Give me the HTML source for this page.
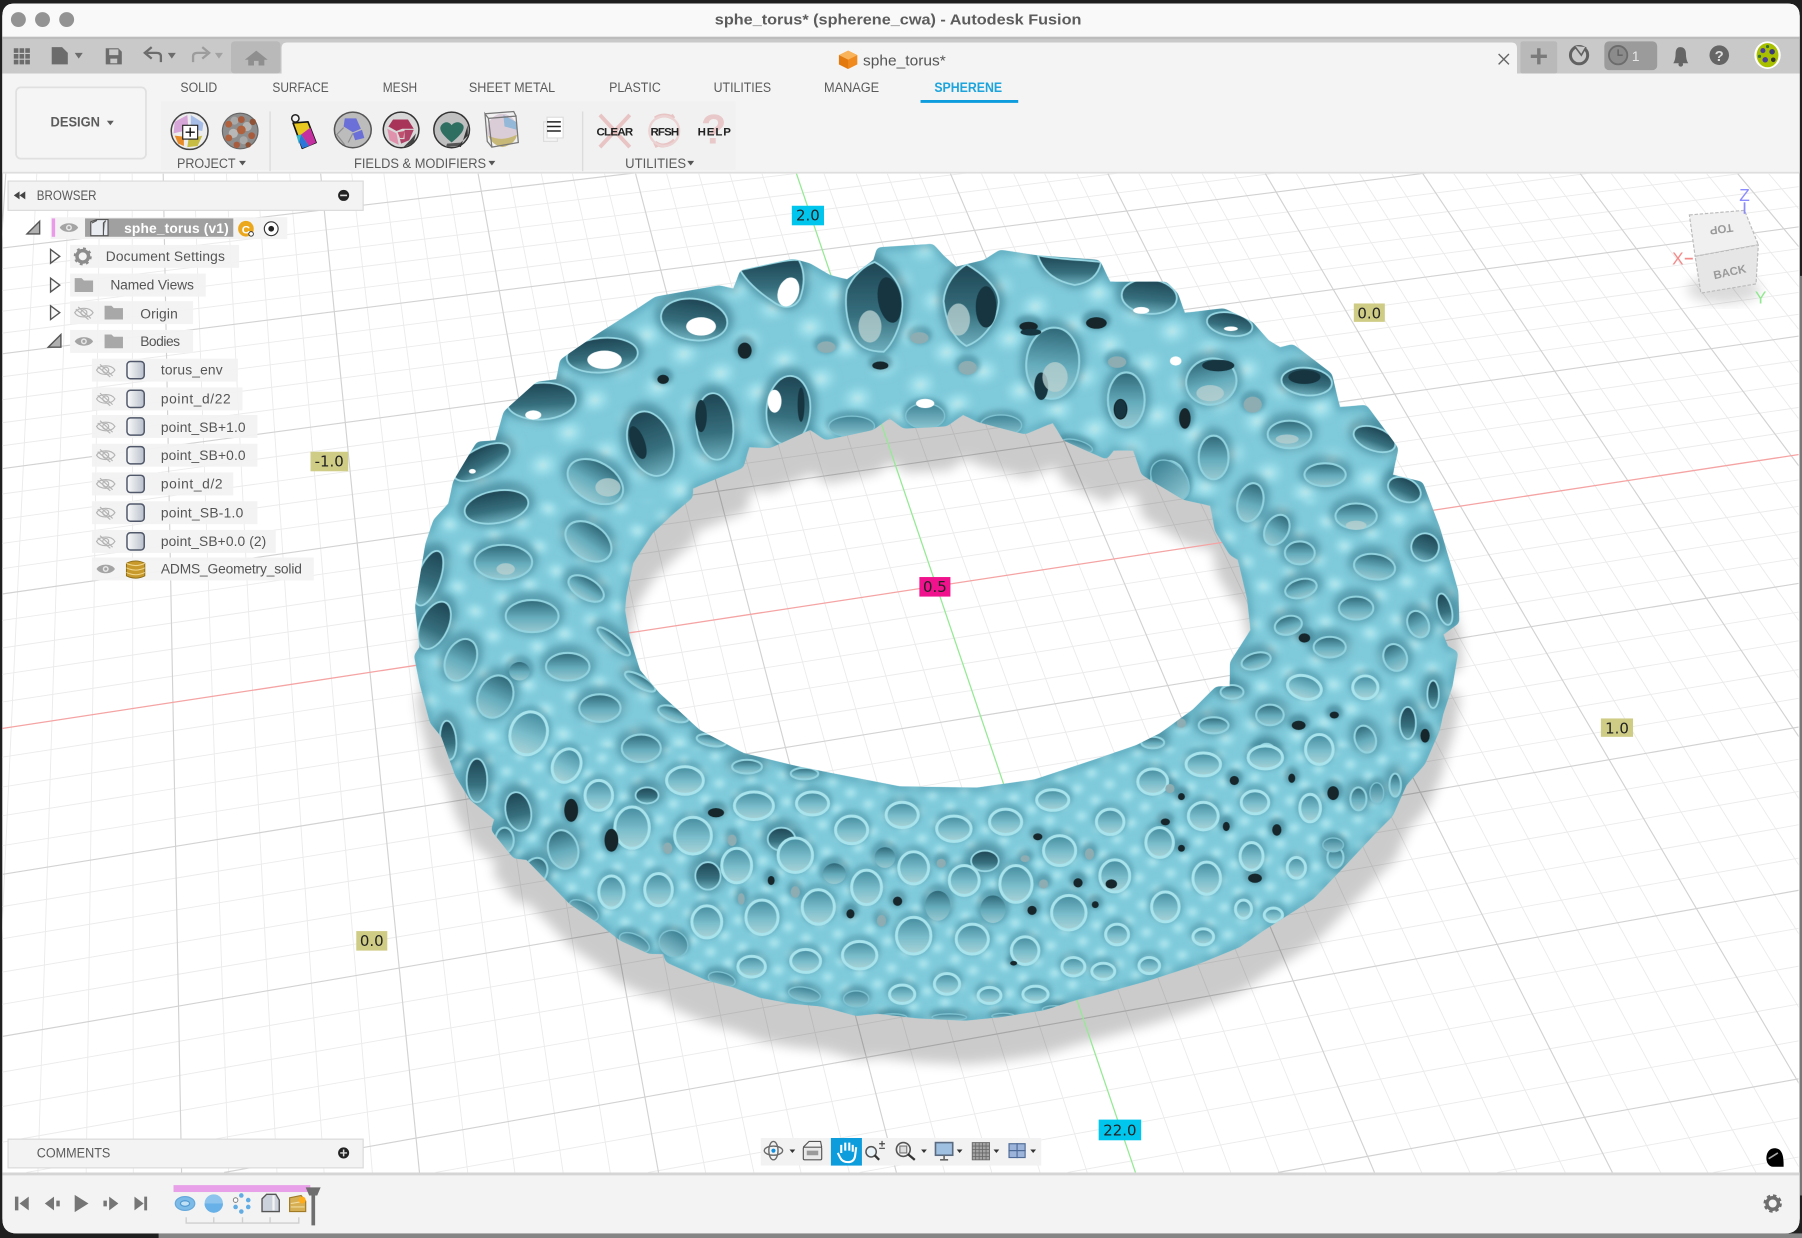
<!DOCTYPE html>
<html><head><meta charset="utf-8"><title>sphe_torus* (spherene_cwa) - Autodesk Fusion</title>
<style>html,body{margin:0;padding:0;background:#222;width:1802px;height:1238px;overflow:hidden}svg{display:block;overflow:hidden}
text{font-family:"Liberation Sans",sans-serif}
.t{fill:#5a5a5a;font-size:12px}.b{fill:#555;font-size:12px;letter-spacing:.3px}.l{fill:#222;font-family:"DejaVu Sans",sans-serif;font-size:13px;text-anchor:middle}
.mn{stroke:#ebebeb;stroke-width:.8;fill:none}.mj{stroke:#d2d2d2;stroke-width:1;fill:none}</style></head><body>
<svg width="1802" height="1238" viewBox="0 0 1568 1077" preserveAspectRatio="none" xmlns="http://www.w3.org/2000/svg">
<defs>
<filter id="b1" filterUnits="userSpaceOnUse" x="340" y="190" width="950" height="720"><feGaussianBlur stdDeviation="1.800"/></filter>
<filter id="b2" x="-20%" y="-20%" width="140%" height="140%"><feGaussianBlur stdDeviation="2"/></filter>
<filter id="b3" x="-20%" y="-20%" width="140%" height="140%"><feGaussianBlur stdDeviation="3.2"/></filter>
<filter id="b5" x="-20%" y="-20%" width="140%" height="140%"><feGaussianBlur stdDeviation="5"/></filter>
<filter id="goo" filterUnits="userSpaceOnUse" x="340" y="190" width="950" height="720"><feGaussianBlur in="SourceAlpha" stdDeviation="2.6" result="a"/><feComponentTransfer in="a" result="t"><feFuncA type="linear" slope="10" intercept="-4.5"/></feComponentTransfer><feComposite in="SourceGraphic" in2="t" operator="in"/></filter>
<radialGradient id="sp"><stop offset="0" stop-color="#c6e8e8"/><stop offset=".3" stop-color="#a8e6f0" stop-opacity=".85"/><stop offset="1" stop-color="#8fd8e6" stop-opacity="0"/></radialGradient>
<linearGradient id="gd" x1="0" y1="0" x2="0" y2="1"><stop offset="0" stop-color="#1f4654"/><stop offset=".6" stop-color="#37707f"/><stop offset="1" stop-color="#6fb0be"/></linearGradient>
<linearGradient id="gm" x1="0" y1="0" x2="0" y2="1"><stop offset="0" stop-color="#2f6878"/><stop offset=".55" stop-color="#66adbd"/><stop offset="1" stop-color="#98cad2"/></linearGradient>
<linearGradient id="gl" x1="0" y1="0" x2="0" y2="1"><stop offset="0" stop-color="#458da0"/><stop offset=".55" stop-color="#7bbecc"/><stop offset="1" stop-color="#aad4d8"/></linearGradient>
<linearGradient id="gc" x1="0" y1="0" x2="0" y2="1"><stop offset="0" stop-color="#3e8396"/><stop offset="1" stop-color="#8cc6d2"/></linearGradient>
<linearGradient id="cy" x1="0" y1="0" x2="1" y2="0"><stop offset="0" stop-color="#fafafa"/><stop offset="1" stop-color="#b9c0cc"/></linearGradient>
<pattern id="pa" width="56" height="46" patternUnits="userSpaceOnUse" patternTransform="rotate(-12)"><ellipse cx="14" cy="11" rx="17" ry="14" fill="url(#sp)"/><ellipse cx="42" cy="34" rx="17" ry="14" fill="url(#sp)"/></pattern>
<pattern id="pb" width="40" height="34" patternUnits="userSpaceOnUse" patternTransform="rotate(14)"><ellipse cx="10" cy="8" rx="12" ry="10" fill="url(#sp)"/><ellipse cx="30" cy="25" rx="12" ry="10" fill="url(#sp)"/></pattern>
<pattern id="pc" width="28" height="24" patternUnits="userSpaceOnUse" patternTransform="rotate(-8)"><ellipse cx="7" cy="6" rx="8.500" ry="7.500" fill="url(#sp)"/><ellipse cx="21" cy="18" rx="8.500" ry="7.500" fill="url(#sp)"/></pattern>
<clipPath id="vp"><rect x="2" y="151" width="1563" height="869"/></clipPath>
<clipPath id="tc"><path clip-rule="evenodd" d="M763 215L812 212 821 222 832 232 856 226 870 217 902 222 957 226 966 245 1015 245 1025 255 1031 272 1065 268 1090 280 1104 296 1114 302 1125 299 1159 325 1166 354 1189 352 1217 390 1212 413 1238 419 1253 459 1263 493 1269 514 1270 542 1256 552 1260 562 1269 567 1264 597 1256 621 1253 635 1240 665 1224 683 1212 710 1198 724 1166 758 1143 782 1099 810 1079 824 1040 840 1000 853 957 865 937 870 908 879 870 885 841 888 798 886 764 882 745 884 716 876 687 873 661 868 638 859 615 853 579 837 577 830 565 830 539 818 520 803 495 786 458 748 447 747 427 722 430 713 409 696 396 675 384 641 374 629 365 595 360 570 365 563 361 528 370 473 377 452 390 438 394 419 415 384 431 383 438 358 467 332 484 330 487 313 519 291 555 268 570 258 609 251 626 248 638 251 644 235 690 225 705 229 722 239 737 243 760 226ZM652 389L670 390 705 374 718 383 760 374 774 364 786 373 824 371 838 361 850 367 892 378 916 368 925 383 963 400 969 392 986 392 993 413 1030 435 1053 440 1057 462 1070 483 1077 487 1085 521 1088 548 1079 562 1070 576 1070 597 1058 597 1038 617 1009 638 989 648 957 659 900 678 850 685 783 684 696 667 647 655 609 635 574 603 557 583 548 554 544 531 545 519 551 490 568 464 586 447 603 433 603 425 647 407Z"/></clipPath>
<path id="tp" fill-rule="evenodd" d="M763 215L812 212 821 222 832 232 856 226 870 217 902 222 957 226 966 245 1015 245 1025 255 1031 272 1065 268 1090 280 1104 296 1114 302 1125 299 1159 325 1166 354 1189 352 1217 390 1212 413 1238 419 1253 459 1263 493 1269 514 1270 542 1256 552 1260 562 1269 567 1264 597 1256 621 1253 635 1240 665 1224 683 1212 710 1198 724 1166 758 1143 782 1099 810 1079 824 1040 840 1000 853 957 865 937 870 908 879 870 885 841 888 798 886 764 882 745 884 716 876 687 873 661 868 638 859 615 853 579 837 577 830 565 830 539 818 520 803 495 786 458 748 447 747 427 722 430 713 409 696 396 675 384 641 374 629 365 595 360 570 365 563 361 528 370 473 377 452 390 438 394 419 415 384 431 383 438 358 467 332 484 330 487 313 519 291 555 268 570 258 609 251 626 248 638 251 644 235 690 225 705 229 722 239 737 243 760 226ZM652 389L670 390 705 374 718 383 760 374 774 364 786 373 824 371 838 361 850 367 892 378 916 368 925 383 963 400 969 392 986 392 993 413 1030 435 1053 440 1057 462 1070 483 1077 487 1085 521 1088 548 1079 562 1070 576 1070 597 1058 597 1038 617 1009 638 989 648 957 659 900 678 850 685 783 684 696 667 647 655 609 635 574 603 557 583 548 554 544 531 545 519 551 490 568 464 586 447 603 433 603 425 647 407Z"/>
<g id="hd">
<path d="M644 235C660 232 680 226 695 226 700 235 701 246 696 260 690 270 680 268 672 262 660 254 650 245 644 235Z"/>
<path d="M903 222C920 226 945 226 958 228 956 238 950 246 935 248 920 245 908 238 903 222Z"/>
<path d="M761 228C776 236 787 250 785 268 784 285 776 300 769 306 757 306 747 303 742 291 736 278 735 262 737 252 742 240 752 231 761 228Z"/>
<path d="M841 230C855 238 869 250 869 263 868 280 855 296 841 301 830 295 823 280 821 262 822 248 831 236 841 230Z"/>
<ellipse cx="604" cy="278" rx="29" ry="18" transform="rotate(8 604 278)"/>
<ellipse cx="524" cy="309" rx="31" ry="15" transform="rotate(-5 524 309)"/>
<ellipse cx="471" cy="349" rx="30" ry="16" transform="rotate(-3 471 349)"/>
<ellipse cx="419" cy="402" rx="27" ry="12" transform="rotate(-28 419 402)"/>
<ellipse cx="622" cy="371" rx="16" ry="29" transform="rotate(-5 622 371)"/>
<ellipse cx="566" cy="386" rx="19" ry="29" transform="rotate(-20 566 386)"/>
<ellipse cx="686" cy="357" rx="19" ry="30" transform="rotate(5 686 357)"/>
<ellipse cx="373" cy="503" rx="10" ry="25" transform="rotate(20 373 503)"/>
<ellipse cx="378" cy="544" rx="12" ry="22" transform="rotate(25 378 544)"/>
<ellipse cx="432" cy="441" rx="28" ry="14" transform="rotate(-10 432 441)"/>
<ellipse cx="1000" cy="258" rx="24" ry="15" transform="rotate(5 1000 258)"/>
<ellipse cx="1070" cy="282" rx="20" ry="10" transform="rotate(10 1070 282)"/>
<ellipse cx="1137" cy="332" rx="22" ry="12" transform="rotate(5 1137 332)"/>
<ellipse cx="1196" cy="382" rx="19" ry="10" transform="rotate(20 1196 382)"/>
<ellipse cx="1222" cy="426" rx="15" ry="10" transform="rotate(25 1222 426)"/>
<ellipse cx="1240" cy="476" rx="12" ry="12" transform="rotate(20 1240 476)"/>
<ellipse cx="1257" cy="530" rx="6" ry="14" transform="rotate(-15 1257 530)"/>
<ellipse cx="1247" cy="604" rx="5" ry="12"/><ellipse cx="1225" cy="629" rx="7" ry="14"/>
<ellipse cx="415" cy="679" rx="9" ry="19"/><ellipse cx="390" cy="644" rx="7" ry="17" transform="rotate(-5 390 644)"/>
<ellipse cx="451" cy="706" rx="11" ry="17" transform="rotate(-12 451 706)"/>
<ellipse cx="563" cy="692" rx="10" ry="7"/><ellipse cx="680" cy="730" rx="12" ry="10"/><ellipse cx="616" cy="762" rx="11" ry="12"/><ellipse cx="857" cy="749" rx="12" ry="9"/><ellipse cx="1102" cy="655" rx="8" ry="8"/>
</g>
<g id="hm">
<ellipse cx="518" cy="419" rx="26" ry="17" transform="rotate(30 518 419)"/>
<ellipse cx="512" cy="471" rx="22" ry="15" transform="rotate(35 512 471)"/>
<ellipse cx="438" cy="489" rx="25" ry="15"/><ellipse cx="463" cy="536" rx="23" ry="14"/>
<ellipse cx="401" cy="574" rx="13" ry="19" transform="rotate(25 401 574)"/>
<ellipse cx="494" cy="580" rx="19" ry="12"/><ellipse cx="431" cy="606" rx="15" ry="19" transform="rotate(25 431 606)"/>
<ellipse cx="522" cy="616" rx="18" ry="12"/><ellipse cx="558" cy="651" rx="17" ry="12"/>
<ellipse cx="510" cy="512" rx="17" ry="9" transform="rotate(30 510 512)"/>
<ellipse cx="534" cy="558" rx="18" ry="5" transform="rotate(40 534 558)"/>
<ellipse cx="557" cy="593" rx="15" ry="5" transform="rotate(30 557 593)"/>
<ellipse cx="586" cy="621" rx="14" ry="6" transform="rotate(20 586 621)"/>
<ellipse cx="619" cy="644" rx="13" ry="5" transform="rotate(10 619 644)"/>
<ellipse cx="650" cy="667" rx="13" ry="6"/><ellipse cx="700" cy="673" rx="12" ry="5"/>
<ellipse cx="916" cy="316" rx="23" ry="31" transform="rotate(5 916 316)"/>
<ellipse cx="980" cy="348" rx="16" ry="24"/>
<ellipse cx="1054" cy="332" rx="22" ry="20" transform="rotate(-15 1054 332)"/>
<ellipse cx="1056" cy="398" rx="13" ry="19"/><ellipse cx="1122" cy="378" rx="19" ry="12"/>
<ellipse cx="1016" cy="416" rx="14" ry="15" transform="rotate(30 1016 416)"/>
<ellipse cx="1088" cy="437" rx="11" ry="17" transform="rotate(15 1088 437)"/>
<ellipse cx="1153" cy="413" rx="18" ry="10"/><ellipse cx="1111" cy="461" rx="10" ry="14" transform="rotate(30 1111 461)"/>
<ellipse cx="1180" cy="449" rx="18" ry="11"/><ellipse cx="1131" cy="481" rx="13" ry="10"/>
<ellipse cx="1196" cy="493" rx="18" ry="11" transform="rotate(8 1196 493)"/>
<ellipse cx="1132" cy="512" rx="14" ry="8" transform="rotate(-15 1132 512)"/>
<ellipse cx="1180" cy="529" rx="15" ry="10"/><ellipse cx="1121" cy="544" rx="12" ry="8" transform="rotate(-15 1121 544)"/>
<ellipse cx="1157" cy="563" rx="14" ry="9"/><ellipse cx="1234" cy="543" rx="9" ry="12" transform="rotate(-25 1234 543)"/>
<ellipse cx="1093" cy="575" rx="13" ry="7" transform="rotate(-15 1093 575)"/>
<ellipse cx="1072" cy="602" rx="10" ry="6"/><ellipse cx="1105" cy="622" rx="12" ry="9"/>
<ellipse cx="1056" cy="631" rx="13" ry="7"/><ellipse cx="1003" cy="646" rx="10" ry="5"/>
<ellipse cx="1214" cy="572" rx="10" ry="12" transform="rotate(-25 1214 572)"/>
<ellipse cx="1188" cy="643" rx="9" ry="12" transform="rotate(-20 1188 643)"/>
<ellipse cx="1214" cy="683" rx="5" ry="10"/><ellipse cx="1182" cy="695" rx="7" ry="10"/>
<ellipse cx="1162" cy="746" rx="7" ry="9"/><ellipse cx="490" cy="739" rx="13" ry="17" transform="rotate(-15 490 739)"/>
<ellipse cx="466" cy="758" rx="10" ry="12" transform="rotate(25 466 758)"/><ellipse cx="439" cy="731" rx="8" ry="11"/>
</g>
<g id="hl">
<ellipse cx="460" cy="638" rx="16" ry="19" transform="rotate(20 460 638)"/><ellipse cx="493" cy="666" rx="12" ry="15" transform="rotate(25 493 666)"/>
<ellipse cx="596" cy="679" rx="16" ry="12"/><ellipse cx="521" cy="692" rx="12" ry="13"/>
<ellipse cx="656" cy="701" rx="17" ry="12"/><ellipse cx="707" cy="699" rx="14" ry="10"/>
<ellipse cx="550" cy="720" rx="15" ry="18"/><ellipse cx="603" cy="727" rx="16" ry="16"/>
<ellipse cx="785" cy="709" rx="14" ry="11"/><ellipse cx="741" cy="722" rx="14" ry="12"/>
<ellipse cx="830" cy="721" rx="15" ry="11"/><ellipse cx="875" cy="715" rx="14" ry="11"/>
<ellipse cx="916" cy="696" rx="14" ry="9"/><ellipse cx="922" cy="740" rx="14" ry="13"/>
<ellipse cx="641" cy="753" rx="13" ry="15"/><ellipse cx="692" cy="744" rx="15" ry="15"/>
<ellipse cx="795" cy="755" rx="13" ry="14"/><ellipse cx="839" cy="766" rx="13" ry="13"/>
<ellipse cx="884" cy="769" rx="14" ry="16"/><ellipse cx="754" cy="772" rx="13" ry="15"/>
<ellipse cx="573" cy="774" rx="12" ry="14"/><ellipse cx="532" cy="776" rx="11" ry="14"/>
<ellipse cx="712" cy="789" rx="14" ry="15"/><ellipse cx="663" cy="798" rx="14" ry="15"/>
<ellipse cx="615" cy="802" rx="13" ry="14"/><ellipse cx="795" cy="814" rx="15" ry="16"/>
<ellipse cx="846" cy="817" rx="14" ry="13"/><ellipse cx="892" cy="827" rx="12" ry="12"/>
<ellipse cx="930" cy="794" rx="15" ry="15"/><ellipse cx="748" cy="831" rx="15" ry="12"/>
<ellipse cx="701" cy="836" rx="13" ry="10"/><ellipse cx="654" cy="841" rx="12" ry="9"/>
<ellipse cx="824" cy="856" rx="11" ry="9"/><ellipse cx="785" cy="865" rx="11" ry="8"/>
<ellipse cx="861" cy="866" rx="10" ry="7"/><ellipse cx="901" cy="865" rx="11" ry="7"/>
<ellipse cx="934" cy="841" rx="10" ry="8"/>
<ellipse cx="1135" cy="598" rx="15" ry="10" transform="rotate(15 1135 598)"/><ellipse cx="1188" cy="598" rx="11" ry="10"/>
<ellipse cx="1148" cy="652" rx="12" ry="13"/><ellipse cx="1101" cy="659" rx="15" ry="10"/>
<ellipse cx="1047" cy="665" rx="15" ry="10"/><ellipse cx="1092" cy="698" rx="12" ry="10"/>
<ellipse cx="1140" cy="703" rx="9" ry="12"/><ellipse cx="1003" cy="680" rx="13" ry="11"/>
<ellipse cx="1047" cy="710" rx="13" ry="12"/><ellipse cx="966" cy="715" rx="12" ry="11"/>
<ellipse cx="1009" cy="733" rx="12" ry="13"/><ellipse cx="1089" cy="745" rx="10" ry="12"/>
<ellipse cx="1050" cy="764" rx="12" ry="14"/><ellipse cx="970" cy="762" rx="13" ry="14"/>
<ellipse cx="1014" cy="789" rx="12" ry="13"/><ellipse cx="1128" cy="755" rx="8" ry="9"/>
<ellipse cx="1082" cy="791" rx="7" ry="8"/><ellipse cx="1047" cy="815" rx="9" ry="7"/>
<ellipse cx="1108" cy="796" rx="8" ry="6"/><ellipse cx="972" cy="813" rx="10" ry="9"/>
<ellipse cx="1000" cy="840" rx="9" ry="7"/><ellipse cx="960" cy="845" rx="10" ry="7"/>
</g>
<g id="pl"><ellipse cx="726" cy="760" rx="10" ry="9"/><ellipse cx="770" cy="746" rx="9" ry="9"/><ellipse cx="816" cy="788" rx="11" ry="13"/><ellipse cx="864" cy="791" rx="11" ry="12"/><ellipse cx="452" cy="584" rx="9" ry="8"/></g>
<g id="hc">
<ellipse cx="741" cy="371" rx="20" ry="9"/><ellipse cx="805" cy="362" rx="17" ry="11"/><ellipse cx="871" cy="370" rx="18" ry="9"/>
<ellipse cx="937" cy="388" rx="14" ry="5" transform="rotate(15 937 388)"/><ellipse cx="1018" cy="418" rx="14" ry="20" transform="rotate(-40 1018 418)"/>
<ellipse cx="552" cy="820" rx="14" ry="7" transform="rotate(25 552 820)"/><ellipse cx="586" cy="821" rx="13" ry="11" transform="rotate(30 586 821)"/>
<ellipse cx="628" cy="852" rx="12" ry="6" transform="rotate(15 628 852)"/><ellipse cx="700" cy="865" rx="14" ry="6" transform="rotate(10 700 865)"/>
<ellipse cx="745" cy="869" rx="11" ry="7"/><ellipse cx="777" cy="885" rx="12" ry="3"/><ellipse cx="826" cy="885" rx="15" ry="3"/>
<ellipse cx="873" cy="884" rx="10" ry="2.5"/><ellipse cx="917" cy="878" rx="10" ry="3"/><ellipse cx="508" cy="792" rx="14" ry="7" transform="rotate(30 508 792)"/>
<ellipse cx="1160" cy="735" rx="9" ry="6"/><ellipse cx="1198" cy="690" rx="6" ry="9"/>
</g>
<g id="pg">
<ellipse cx="719" cy="302" rx="8" ry="5"/><ellipse cx="800" cy="294" rx="8" ry="5"/><ellipse cx="842" cy="320" rx="8" ry="6"/>
<ellipse cx="972" cy="315" rx="8" ry="5"/><ellipse cx="1090" cy="352" rx="8" ry="7"/>
<ellipse cx="637" cy="731" rx="4" ry="5"/><ellipse cx="581" cy="738" rx="4" ry="5"/><ellipse cx="692" cy="776" rx="4" ry="5"/><ellipse cx="645" cy="782" rx="3" ry="5"/><ellipse cx="767" cy="801" rx="4" ry="5"/><ellipse cx="819" cy="751" rx="4" ry="4"/><ellipse cx="892" cy="747" rx="4" ry="3"/><ellipse cx="908" cy="769" rx="4" ry="4"/><ellipse cx="948" cy="743" rx="4" ry="5"/><ellipse cx="1018" cy="686" rx="4" ry="4"/><ellipse cx="1028" cy="629" rx="4" ry="4"/>
</g>
<g id="pk">
<ellipse cx="648" cy="305" rx="6" ry="7"/><ellipse cx="577" cy="330" rx="5" ry="4"/><ellipse cx="766" cy="318" rx="7" ry="3.5"/><ellipse cx="895" cy="284" rx="8" ry="4"/><ellipse cx="954" cy="281" rx="9" ry="5"/>
<ellipse cx="975" cy="356" rx="6" ry="9"/><ellipse cx="1031" cy="364" rx="5" ry="9"/><ellipse cx="671" cy="766" rx="3" ry="4"/><ellipse cx="740" cy="795" rx="3.5" ry="4"/><ellipse cx="781" cy="784" rx="4" ry="4"/><ellipse cx="898" cy="792" rx="4" ry="4"/><ellipse cx="938" cy="768" rx="4" ry="4"/><ellipse cx="882" cy="838" rx="3" ry="2"/><ellipse cx="953" cy="787" rx="3" ry="3"/>
<ellipse cx="623" cy="707" rx="7" ry="4"/><ellipse cx="903" cy="728" rx="4" ry="3"/><ellipse cx="1161" cy="622" rx="4" ry="3"/><ellipse cx="1124" cy="677" rx="3" ry="4"/><ellipse cx="1111" cy="722" rx="4" ry="5"/><ellipse cx="967" cy="769" rx="5" ry="4"/><ellipse cx="1092" cy="764" rx="6" ry="4"/><ellipse cx="1067" cy="719" rx="3" ry="4"/><ellipse cx="1028" cy="738" rx="3" ry="3"/><ellipse cx="1014" cy="715" rx="4" ry="3"/><ellipse cx="1028" cy="693" rx="3" ry="3"/><ellipse cx="1074" cy="679" rx="4" ry="4"/><ellipse cx="1130" cy="631" rx="6" ry="4"/>
<ellipse cx="497" cy="705" rx="6" ry="10"/><ellipse cx="532" cy="731" rx="6" ry="10"/><ellipse cx="1240" cy="640" rx="4" ry="6"/><ellipse cx="1160" cy="690" rx="5" ry="6"/><ellipse cx="1135" cy="555" rx="5" ry="4"/>
</g>
<g id="eye"><path d="M-8 0C-5 -5 5 -5 8 0 5 5 -5 5 -8 0Z" fill="#a4a4a4"/><circle r="2.6" fill="#e6e6e6"/><circle r="1.3" fill="#a4a4a4"/></g>
<g id="eo" fill="none" stroke="#b4b4b4" stroke-width="1"><path d="M-8 0C-5 -5 5 -5 8 0 5 5 -5 5 -8 0Z"/><circle r="2.6"/><path d="M-5 -5L6 5M-7 -3L4 6"/></g>
<g id="bd"><rect x="-7.5" y="-7.5" width="15" height="15" rx="3" fill="url(#cy)" stroke="#50586a" stroke-width="1.3"/></g>
<path id="fd" d="M-8 -6H-2L0 -4H8V6H-8Z" fill="#a8a8a8"/>
<path id="ti" d="M0 -6L8 0 0 6Z" fill="#fafafa" stroke="#555" stroke-width="1.2"/>
<path id="tx" d="M-6 5L5 -6V5Z" fill="#b0b0b0" stroke="#555" stroke-width="1.2"/>
</defs>

<rect width="1568" height="1077" fill="#1f1f1f"/>
<path d="M2 14Q2 3 13 3H1555Q1566 3 1566 14V1060Q1566 1073 1553 1073H15Q2 1073 2 1060Z" fill="#fff"/>
<rect x="138" y="1073" width="1430" height="4" fill="#858585"/>
<rect x="1566" y="240" width="2" height="800" fill="#777"/>
<path d="M2 14Q2 3 13 3H1555Q1566 3 1566 14V32H2Z" fill="#f9f9f9"/>
<circle cx="16" cy="17" r="6.5" fill="#939393"/><circle cx="37" cy="17" r="6.5" fill="#939393"/><circle cx="58" cy="17" r="6.5" fill="#939393"/>
<text x="622" y="21.5" font-size="13" font-weight="bold" fill="#5c5c5c" textLength="319" lengthAdjust="spacingAndGlyphs">sphe_torus* (spherene_cwa) - Autodesk Fusion</text>
<rect x="2" y="32" width="1564" height="32" fill="#c9c9c9"/>
<rect x="2" y="32" width="1564" height="2" fill="#bcbcbc"/>
<rect x="201" y="36" width="43" height="28" rx="3" fill="#b9b9b9"/>
<path d="M245 64V42Q245 37 250 37H1315Q1320 37 1320 42V64Z" fill="#f4f4f4"/>
<rect x="1323" y="36" width="32" height="28" rx="2" fill="#b9b9b9"/>
<rect x="2" y="64" width="1564" height="86" fill="#f4f4f4"/>
<rect x="2" y="149.500" width="1564" height="1.5" fill="#dedede"/>

<g fill="#6c6c6c">
<path d="M12 42h4v4h-4zM17 42h4v4h-4zM22 42h4v4h-4zM12 47h4v4h-4zM17 47h4v4h-4zM22 47h4v4h-4zM12 52h4v4h-4zM17 52h4v4h-4zM22 52h4v4h-4z"/>
<path d="M45 41H54L59 46V56H45Z"/><path d="M65 46H72L68.500 51Z"/>
<path d="M92 42H103L106 45V56H92ZM95 43V48H103V43ZM96 51V55H102V51Z" fill-rule="evenodd"/>
<path d="M146 46H153L149.500 51Z"/><path d="M187 46H194L190.500 51Z" fill="#a2a2a2"/>
<path d="M216 57V52H213L223 44 233 52H230V57H225V53H221V57Z" fill="#8f8f8f"/>
</g>
<path d="M140 54V49Q140 46 136 46H128M132 41L126 46 132 51" fill="none" stroke="#6c6c6c" stroke-width="2"/>
<path d="M168 54V49Q168 46 172 46H180M176 41L182 46 176 51" fill="none" stroke="#9c9c9c" stroke-width="2"/>
<path d="M738 44L746 48V56L738 60 730 56V48Z" fill="#f08a1e"/><path d="M738 44L746 48 738 52 730 48Z" fill="#f9b35a"/><path d="M738 52V60L730 56V48Z" fill="#e27a10"/>
<text x="751" y="57" font-size="13" fill="#555" textLength="72" lengthAdjust="spacingAndGlyphs">sphe_torus*</text>
<path d="M1304 47L1313 56M1313 47L1304 56" stroke="#666" stroke-width="1.2"/>
<path d="M1339 42V56M1332 49H1346" stroke="#7a7a7a" stroke-width="3"/>
<circle cx="1374" cy="48" r="7.5" fill="none" stroke="#616161" stroke-width="2.6"/><path d="M1370 40L1376 48 1380 41" fill="#c9c9c9" stroke="#616161" stroke-width="1.4"/>
<rect x="1396" y="36" width="46" height="25" rx="4" fill="#9b9b9b"/>
<circle cx="1408" cy="48" r="8" fill="#8b8b8b" stroke="#6c6c6c" stroke-width="1.6"/><path d="M1408 43V48H1412" fill="none" stroke="#616161" stroke-width="1.2"/>
<text x="1420" y="53" font-size="12" fill="#e8e8e8">1</text>
<path d="M1456 55Q1458 52 1458 47 1458 41 1462 41 1467 41 1467 47 1467 52 1469 55Z" fill="#656565"/><circle cx="1462.500" cy="56" r="2" fill="#656565"/>
<circle cx="1496" cy="48" r="8.5" fill="#656565"/><text x="1496" y="53" font-size="13" font-weight="bold" fill="#ddd" text-anchor="middle">?</text>
<ellipse cx="1538" cy="48" rx="11.500" ry="12" fill="#fff"/><ellipse cx="1538" cy="48" rx="9.500" ry="10.500" fill="#a8c000"/><circle cx="1534" cy="44" r="2.200" fill="#4a3f9c"/><circle cx="1542" cy="45" r="2.400" fill="#3a3a7c"/><circle cx="1536" cy="52" r="2.400" fill="#4a3f9c"/><circle cx="1543" cy="52" r="2" fill="#333"/><circle cx="1538" cy="40.500" r="1.400" fill="#2f6d3a"/><circle cx="1531" cy="49" r="1.400" fill="#2f6d3a"/>

<rect x="14" y="76" width="113" height="62" rx="4" fill="#f5f5f5" stroke="#e0e0e0" stroke-width="1.5"/>
<text x="44" y="110" font-size="12" font-weight="bold" fill="#5c5c5c" textLength="43" lengthAdjust="spacingAndGlyphs">DESIGN</text><path d="M93 105H99L96 109Z" fill="#5c5c5c"/>
<rect x="140" y="88" width="500" height="60" fill="#f1f1f1"/>
<g class="t">
<text x="157" y="80" class="t" textLength="32" lengthAdjust="spacingAndGlyphs">SOLID</text>
<text x="237" y="80" class="t" textLength="49" lengthAdjust="spacingAndGlyphs">SURFACE</text>
<text x="333" y="80" class="t" textLength="30" lengthAdjust="spacingAndGlyphs">MESH</text>
<text x="408" y="80" class="t" textLength="75" lengthAdjust="spacingAndGlyphs">SHEET METAL</text>
<text x="530" y="80" class="t" textLength="45" lengthAdjust="spacingAndGlyphs">PLASTIC</text>
<text x="621" y="80" class="t" textLength="50" lengthAdjust="spacingAndGlyphs">UTILITIES</text>
<text x="717" y="80" class="t" textLength="48" lengthAdjust="spacingAndGlyphs">MANAGE</text></g>
<text x="813" y="80" font-size="12" font-weight="bold" fill="#1ea4dc" textLength="59" lengthAdjust="spacingAndGlyphs">SPHERENE</text>
<rect x="801" y="87" width="85" height="2.500" fill="#0d9cdd"/>
<text x="154" y="146" class="t" textLength="51" lengthAdjust="spacingAndGlyphs">PROJECT</text><path d="M208 140H214L211 144Z" fill="#555"/>
<text x="308" y="146" class="t" textLength="115" lengthAdjust="spacingAndGlyphs">FIELDS &amp; MODIFIERS</text><path d="M425 140H431L428 144Z" fill="#555"/>
<text x="544" y="146" class="t" textLength="53" lengthAdjust="spacingAndGlyphs">UTILITIES</text><path d="M598 140H604L601 144Z" fill="#555"/>
<path d="M235 97V149M507 97V149" stroke="#dcdcdc" stroke-width="1.2"/>

<!-- ribbon icons -->
<g><ellipse cx="165" cy="114" rx="16" ry="16" fill="#ededed" stroke="#444" stroke-width="1.300"/><path d="M152 106L163 100 164 113 151 116Z" fill="#d7a6d8"/><path d="M166 100L177 107 176 114 166 112Z" fill="#a6bee8"/><path d="M152 118L160 119 160 127 155 125Z" fill="#e88c2a"/><path d="M164 121L176 118 172 127 163 128Z" fill="#c8bd44"/><rect x="159" y="109" width="13" height="12" fill="#fff" stroke="#222"/><path d="M165.500 111V119M161.500 115H169.500" stroke="#111" stroke-width="1.200"/></g>
<g><circle cx="209" cy="114" r="15.500" fill="#8d8d8d" stroke="#666"/><circle cx="204" cy="105" r="3.500" fill="#a9a9a9"/><circle cx="215" cy="110" r="4" fill="#b4b4b4"/><circle cx="203" cy="116" r="4" fill="#b8b8b8"/><circle cx="212" cy="122" r="3.500" fill="#a9a9a9"/><circle cx="199" cy="108" r="3" fill="#b0623e"/><circle cx="210" cy="104" r="3" fill="#a85c3e"/><circle cx="220" cy="106" r="2.800" fill="#8e5236"/><circle cx="210" cy="113" r="3.800" fill="#b0623e"/><circle cx="219" cy="118" r="3" fill="#a85c3e"/><circle cx="199" cy="120" r="3" fill="#b0623e"/><circle cx="206" cy="126" r="2.800" fill="#a85c3e"/><circle cx="216" cy="126" r="2.400" fill="#8e5236"/></g>
<g><path d="M255 107L268 106 275 124 263 129Z" fill="#e8c81e" stroke="#111" stroke-width="1.400" stroke-linejoin="round"/><path d="M262 117L270 111 275 124 269 127Z" fill="#c430a0"/><path d="M262 117L269 127 263 129 258 118Z" fill="#2b76d8"/><path d="M262 117L258 118 260 125Z" fill="#30b8c8"/><circle cx="257" cy="103" r="3.200" fill="#f4f4f4" stroke="#222" stroke-width="1.300"/></g>
<g><ellipse cx="307" cy="113" rx="16" ry="15.500" fill="#bcbcbc" stroke="#555" stroke-width="1.300"/><path d="M300 103L310 103 314 112 307 115 299 110Z" fill="#6a70d8"/><path d="M307 116L315 113 317 120 309 122Z" fill="#6a70d8"/><path d="M299 111L293 117 300 126M307 116L303 124" fill="none" stroke="#8e8e8e"/></g>
<g><ellipse cx="349" cy="113" rx="15.500" ry="15.500" fill="#d8d8d8" stroke="#333" stroke-width="1.300"/><path d="M342 104H355L360 112 350 112 345 114 338 110Z" fill="#a9345a"/><path d="M337 112L345 116 347 126 339 122Z" fill="#e092ac"/><path d="M346 115L352 114 351 120 348 120Z" fill="#c0506e"/><path d="M352 113L360 113 356 122 349 125 348 121 352 121Z" fill="#b04468"/><path d="M357 122L362 116 360 124 350 129Z" fill="#444"/></g>
<g><ellipse cx="393" cy="113" rx="15.500" ry="15.500" fill="#c0c0c0" stroke="#333" stroke-width="1.300"/><path d="M398 127L407 118 407 109 401 128Z" fill="#333"/><path d="M388 128L398 127 402 124 389 125Z" fill="#555"/><path d="M393 124C386 118 381 113 384 109 387 105 391 106 393 109 395 106 400 105 403 109 405 113 400 118 393 124Z" fill="#2f6f62"/></g>
<g fill="none"><ellipse cx="437" cy="113" rx="13" ry="14" fill="#dacdd8"/><path d="M425 118Q437 124 450 117 448 126 437 128 428 126 425 118Z" fill="#c8b878"/><path d="M438 100L449 106 450 113 439 110Z" fill="#94b8d8"/><path d="M425 103L449 101 451 124 428 128ZM422 99L447 97 449 101M425 103L422 99 424 123 428 128" stroke="#777" stroke-width="1.100"/></g>
<g><rect x="473" y="106" width="12" height="17" fill="#f4f4f4" stroke="#ddd"/><rect x="476" y="102" width="14" height="18" fill="#fff" stroke="#ddd"/><path d="M476 106H488M476 110H488M476 114H488" stroke="#222" stroke-width="1.300"/></g>
<path d="M522 100L548 128M548 100L522 128" stroke="#e8c4c4" stroke-width="3.400"/>
<path d="M570 103Q578 98 586 103L584 100M587 122Q578 130 570 124L572 128" fill="none" stroke="#e8c4c4" stroke-width="3.400"/><circle cx="578" cy="114" r="13" fill="none" stroke="#ecd2d2" stroke-width="2"/>
<text x="621" y="125" font-size="36" font-weight="bold" fill="#e8c8c8" text-anchor="middle">?</text>
<g font-size="10" font-weight="bold" fill="#222"><text x="519" y="118" textLength="32" lengthAdjust="spacing">CLEAR</text><text x="566" y="118" textLength="25" lengthAdjust="spacing">RFSH</text><text x="607" y="118" textLength="29" lengthAdjust="spacing">HELP</text></g>

<!-- viewport -->
<g clip-path="url(#vp)">
<path class="mn" d="M32 151L0 846M60 151L33 1020M87 151L75 1020M115 151L116 1020M169 151L199 1020M197 151L241 1020M224 151L282 1020M252 151L324 1020M306 151L407 1020M334 151L448 1020M361 151L490 1020M389 151L531 1020M443 151L614 1020M471 151L656 1020M498 151L697 1020M526 151L739 1020M580 151L822 1020M608 151L863 1020M635 151L905 1020M663 151L946 1020M717 151L1030 1020M745 151L1071 1020M772 151L1113 1020M800 151L1154 1020M854 151L1237 1020M882 151L1279 1020M909 151L1320 1020M937 151L1362 1020M991 151L1445 1020M1019 151L1486 1020M1046 151L1528 1020M1074 151L1568 1020M1128 151L1568 881M1156 151L1568 817M1183 151L1568 757M1211 151L1568 699M1265 151L1568 594M1293 151L1568 544M1320 151L1568 497M1348 151L1568 452M1402 151L1568 368M1430 151L1568 328M1457 151L1568 290M1485 151L1568 253M1539 151L1568 185"/>
<path class="mn" d="M0 234L1568 46M0 253L1568 62M0 271L1568 77M0 290L1568 93M0 328L1568 127M0 348L1568 144M0 368L1568 162M0 388L1568 179M0 430L1568 216M0 452L1568 235M0 473L1568 254M0 495L1568 273M0 540L1568 313M0 564L1568 333M0 587L1568 354M0 611L1568 374M0 659L1568 417M0 685L1568 440M0 710L1568 462M0 736L1568 485M0 789L1568 532M0 817L1568 557M0 846L1568 582M0 874L1568 607M0 933L1568 660M0 963L1568 688M0 994L1568 717M23 1020L1568 746M379 1020L1568 807M564 1020L1568 840M748 1020L1568 873M929 1020L1568 905M1303 1020L1568 972M1491 1020L1568 1006"/>
<path class="mj" d="M5 151L0 230M142 151L158 1020M279 151L365 1020M416 151L573 1020M553 151L780 1020M827 151L1196 1020M964 151L1403 1020M1101 151L1568 947M1238 151L1568 645M1375 151L1568 409M1512 151L1568 218"/>
<path class="mj" d="M0 216L1568 30M0 308L1568 109M0 408L1568 197M0 517L1568 292M0 761L1568 507M0 902L1568 632M195 1020L1568 774M1112 1020L1568 938"/>
<use href="#tp" transform="translate(2 38)" fill="#000" opacity=".2" filter="url(#b5)"/>
<path d="M0 634L1568 395" stroke="#f5a3a3" stroke-width="1.100"/>
<path d="M693 151L988 1020" stroke="#94ea94" stroke-width="1.100"/>

<g filter="url(#goo)">
<use href="#tp" fill="#7fcadb"/>
<g clip-path="url(#tc)">
<g filter="url(#b1)">
<rect x="350" y="200" width="940" height="235" fill="url(#pa)"/>
<rect x="350" y="435" width="940" height="215" fill="url(#pb)"/>
<rect x="350" y="650" width="940" height="250" fill="url(#pc)"/>
</g>
<use href="#tp" fill="none" stroke="#4a96aa" stroke-width="8" filter="url(#b3)" opacity=".5"/>
<g transform="translate(0 -2.500)">
<use href="#hd" fill="#2a6a7d" stroke="#2a6a7d" stroke-width="11" filter="url(#b3)" opacity=".5"/>
<use href="#hm" fill="#2a6a7d" stroke="#2a6a7d" stroke-width="10" filter="url(#b3)" opacity=".45"/>
<use href="#hl" fill="#2f7588" stroke="#2f7588" stroke-width="7" filter="url(#b2)" opacity=".34"/>
<use href="#pl" fill="#2a6a7d" stroke="#2a6a7d" stroke-width="7" filter="url(#b2)" opacity=".4"/>
<use href="#hc" fill="#2a6a7d" stroke="#2a6a7d" stroke-width="5" filter="url(#b2)" opacity=".42"/>
<use href="#pk" fill="#2a6a7d" stroke="#2a6a7d" stroke-width="7" filter="url(#b2)" opacity=".5"/>
<use href="#pg" fill="#2a6a7d" stroke="#2a6a7d" stroke-width="6" filter="url(#b2)" opacity=".42"/>
</g>
<use href="#hd" fill="url(#gd)" stroke="#97d6e2" stroke-width="1.600"/>
<use href="#hm" fill="url(#gm)" stroke="#93d3df" stroke-width="1.800"/>
<use href="#hl" fill="url(#gl)" stroke="#a9e3ec" stroke-width="2.600"/>
<use href="#pl" fill="url(#gm)"/>
<use href="#hc" fill="url(#gc)" stroke="#7fc3d2" stroke-width="1.200"/>
<use href="#pg" fill="#8dadb2"/>
<use href="#pk" fill="#12262c"/>
<g fill="#fff">
<ellipse cx="686" cy="254" rx="9" ry="13" transform="rotate(20 686 254)"/><ellipse cx="610" cy="284" rx="13" ry="8"/><ellipse cx="526" cy="313" rx="15" ry="8"/><ellipse cx="464" cy="361" rx="7" ry="4"/><ellipse cx="674" cy="349" rx="6" ry="10"/><ellipse cx="993" cy="270" rx="7" ry="3"/><ellipse cx="1023" cy="314" rx="5" ry="4"/><ellipse cx="805" cy="351" rx="8" ry="4"/><ellipse cx="1071" cy="286" rx="6" ry="2"/><ellipse cx="411" cy="410" rx="3" ry="2"/>
</g>
<g fill="#16353f"><ellipse cx="774" cy="261" rx="10" ry="20" transform="rotate(-10 774 261)"/><ellipse cx="858" cy="267" rx="9" ry="18"/><ellipse cx="1060" cy="318" rx="14" ry="5"/><ellipse cx="1135" cy="328" rx="14" ry="6"/><ellipse cx="897" cy="289" rx="9" ry="3"/><ellipse cx="906" cy="336" rx="6" ry="12"/><ellipse cx="975" cy="356" rx="5" ry="8"/><ellipse cx="610" cy="362" rx="5" ry="14"/><ellipse cx="555" cy="385" rx="6" ry="15" transform="rotate(-20 555 385)"/><ellipse cx="697" cy="352" rx="3" ry="15"/></g>
<g fill="#b6cfd0" opacity=".8"><ellipse cx="757" cy="284" rx="10" ry="14"/><ellipse cx="834" cy="278" rx="10" ry="14"/><ellipse cx="918" cy="328" rx="11" ry="13"/><ellipse cx="529" cy="424" rx="11" ry="8"/><ellipse cx="440" cy="495" rx="8" ry="5"/><ellipse cx="1053" cy="342" rx="12" ry="7"/><ellipse cx="1180" cy="457" rx="9" ry="4"/><ellipse cx="1120" cy="382" rx="10" ry="4"/></g>
</g>
</g>

<!-- labels -->
<rect x="689" y="179" width="28" height="17" fill="#00c6ee"/><text class="l" x="703" y="192">2.0</text>
<rect x="1178" y="264" width="27" height="16" fill="#cfcc86"/><text class="l" x="1191.500" y="277">0.0</text>
<rect x="270" y="393" width="33" height="17" fill="#cfcc86"/><text class="l" x="286.500" y="406">-1.0</text>
<rect x="800" y="502" width="27" height="17" fill="#f0128c"/><text class="l" x="813.500" y="515">0.5</text>
<rect x="1393" y="625" width="28" height="16" fill="#cfcc86"/><text class="l" x="1407" y="638">1.0</text>
<rect x="310" y="810" width="27" height="17" fill="#cfcc86"/><text class="l" x="323.500" y="823">0.0</text>
<rect x="956" y="974" width="37" height="18" fill="#00c6ee"/><text class="l" x="974.500" y="988">22.0</text>

<!-- view cube -->
<ellipse cx="1500" cy="252" rx="32" ry="12" fill="#000" opacity=".14" filter="url(#b5)"/>
<path d="M1470 187L1518 183 1530 213 1475 223Z" fill="#f0f0f0" stroke="#bbb" stroke-dasharray="3 1.500"/>
<path d="M1475 223L1530 213 1528 247 1480 255Z" fill="#e6e6e6" stroke="#bbb" stroke-dasharray="3 1.500"/>
<text x="1498" y="204" font-size="10" font-weight="bold" fill="#9a9a9a" text-anchor="middle" transform="rotate(172 1498 200)">TOP</text>
<text x="1505" y="240" font-size="10" font-weight="bold" fill="#9a9a9a" text-anchor="middle" transform="rotate(-12 1505 236)">BACK</text>
<text x="1518" y="175" font-size="15" fill="#8b8bff" text-anchor="middle">Z</text><path d="M1518 176V186" stroke="#8b8bff" stroke-width="1.500"/>
<text x="1460" y="230" font-size="15" fill="#f58a8a" text-anchor="middle">X</text><path d="M1466 225H1473" stroke="#f58a8a" stroke-width="1.500"/>
<text x="1532" y="264" font-size="15" fill="#90e890" text-anchor="middle">Y</text>
</g>

<!-- browser -->
<rect x="7" y="157.500" width="309" height="25.500" fill="#f3f3f3" stroke="#d9d9d9"/>
<path d="M12 170L17 166.500V173.500ZM17 170L22 166.500V173.500Z" fill="#444"/>
<text x="32" y="174" class="t" fill="#666" textLength="52" lengthAdjust="spacingAndGlyphs">BROWSER</text>
<circle cx="299" cy="170" r="4.800" fill="#222"/><path d="M296 170H302" stroke="#ddd" stroke-width="1.400"/>

<g fill="#f3f3f3" opacity=".95">
<rect x="44" y="189" width="206" height="19"/><rect x="61" y="213" width="147" height="20"/><rect x="61" y="238" width="118" height="20"/><rect x="61" y="262" width="107" height="20"/><rect x="61" y="287" width="107" height="20"/>
<rect x="80" y="312" width="127" height="20"/><rect x="80" y="337" width="131" height="20"/><rect x="80" y="361" width="144" height="20"/><rect x="80" y="386" width="144" height="20"/><rect x="80" y="411" width="123" height="20"/><rect x="80" y="436" width="144" height="20"/><rect x="80" y="461" width="160" height="20"/><rect x="80" y="485" width="193" height="20"/>
</g>
<use href="#tx" x="29.500" y="198.500"/><rect x="45" y="190" width="3" height="16" fill="#e99be8"/>
<use href="#eye" x="60" y="198"/>
<rect x="74" y="190" width="129" height="16" fill="#a0a0a0"/><path d="M79 193L84 191H94V205H79ZM84 191V192L80 194M92 192L90 194V205" fill="#e9ecf1" stroke="#555"/>
<text x="108" y="202.500" font-size="12" font-weight="bold" fill="#fff" textLength="91" lengthAdjust="spacing">sphe_torus (v1)</text>
<circle cx="214" cy="199" r="6.800" fill="#eca81c"/><text x="214" y="203" font-size="10" font-weight="bold" fill="#fff" text-anchor="middle">C</text><circle cx="218.500" cy="203.500" r="2" fill="#fff" stroke="#333" stroke-width=".8"/>
<circle cx="236" cy="199" r="6" fill="#fff" stroke="#333"/><circle cx="236" cy="199" r="2.500" fill="#222"/>

<use href="#ti" x="44" y="223"/><use href="#ti" x="44" y="248"/><use href="#ti" x="44" y="272"/><use href="#tx" x="48" y="297"/>
<g><circle cx="72" cy="223" r="5" fill="none" stroke="#8c8c8c" stroke-width="3"/><circle cx="72" cy="223" r="7" fill="none" stroke="#8c8c8c" stroke-width="1.700" stroke-dasharray="2.500 3"/></g>
<use href="#fd" x="73" y="248"/><use href="#eo" x="73" y="272"/><use href="#fd" x="99" y="272"/><use href="#eye" x="73" y="297"/><use href="#fd" x="99" y="297"/>
<g class="b">
<text class="b" x="92" y="227" textLength="104">Document Settings</text>
<text class="b" x="96" y="252" textLength="73">Named Views</text>
<text class="b" x="122" y="277" textLength="33">Origin</text>
<text class="b" x="122" y="301" textLength="35">Bodies</text>
<text class="b" x="140" y="326" textLength="54">torus_env</text>
<text class="b" x="140" y="351" textLength="61">point_d/22</text>
<text class="b" x="140" y="376" textLength="74">point_SB+1.0</text>
<text class="b" x="140" y="400" textLength="74">point_SB+0.0</text>
<text class="b" x="140" y="425" textLength="54">point_d/2</text>
<text class="b" x="140" y="450" textLength="72">point_SB-1.0</text>
<text class="b" x="140" y="475" textLength="92">point_SB+0.0 (2)</text>
<text class="b" x="140" y="499" textLength="123">ADMS_Geometry_solid</text>
</g>
<use href="#eo" x="92" y="322"/><use href="#eo" x="92" y="347"/><use href="#eo" x="92" y="371"/><use href="#eo" x="92" y="396"/><use href="#eo" x="92" y="421"/><use href="#eo" x="92" y="446"/><use href="#eo" x="92" y="471"/><use href="#eye" x="92" y="495"/>
<use href="#bd" x="118" y="322"/><use href="#bd" x="118" y="347"/><use href="#bd" x="118" y="371"/><use href="#bd" x="118" y="396"/><use href="#bd" x="118" y="421"/><use href="#bd" x="118" y="446"/><use href="#bd" x="118" y="471"/>
<path d="M110 490Q118 486 126 490V501Q118 505 110 501Z" fill="#c89a2c" stroke="#8a6a14" stroke-width=".8"/><path d="M110 490Q118 494 126 490M110 494Q118 498 126 494M110 498Q118 502 126 498" fill="none" stroke="#f0d68a" stroke-width=".9"/>

<!-- comments -->
<rect x="7" y="991" width="309" height="25" fill="#f3f3f3" stroke="#d9d9d9"/>
<text x="32" y="1007" class="t" fill="#666" textLength="64" lengthAdjust="spacingAndGlyphs">COMMENTS</text>
<circle cx="299" cy="1003" r="4.800" fill="#222"/><path d="M296 1003H302M299 1000V1006" stroke="#ddd" stroke-width="1.300"/>

<!-- nav bar -->
<rect x="662" y="990" width="244" height="24" fill="#f2f2f2"/>
<rect x="723" y="990" width="27" height="24" fill="#0e9ddc"/>
<g fill="none" stroke="#6a6a6a" stroke-width="1.200"><ellipse cx="673" cy="1001" rx="4" ry="8"/><ellipse cx="673" cy="1001" rx="8" ry="4"/></g><circle cx="673" cy="1001" r="1.800" fill="#1090e0"/>
<rect x="699" y="998" width="16" height="11" rx="1" fill="#e8e8e8" stroke="#555"/><path d="M699 998L704 993H714L715 998" fill="none" stroke="#555"/><rect x="702" y="1001" width="10" height="4" fill="#999"/>
<path d="M729 1003L731 1007Q733 1011 738 1011 743 1011 744 1006L745 998M732 1003V996M735.500 1001V994M739 1001V994M742 1002V996" fill="none" stroke="#fff" stroke-width="1.800"/>
<circle cx="758" cy="1002" r="4.500" fill="#e9f3f8" stroke="#555" stroke-width="1.300"/><path d="M761 1005L765 1009" stroke="#333" stroke-width="2"/><path d="M765 995H770M767.500 992.500V997.500M765 999H770" stroke="#444"/>
<circle cx="786" cy="1000" r="6" fill="#f5f5f5" stroke="#555" stroke-width="1.400"/><rect x="783" y="997" width="6" height="6" fill="#ddd" stroke="#777"/><path d="M790 1004L796 1009" stroke="#333" stroke-width="2"/>
<rect x="814" y="994" width="15" height="11" fill="#9fc0e0" stroke="#5a6a80" stroke-width="1.400"/><path d="M818 1009H825M821.500 1005V1009" stroke="#666" stroke-width="1.400"/>
<g fill="#a4a4a4" stroke="#6a6a6a" stroke-width=".8"><rect x="846" y="994" width="15" height="15"/></g><path d="M849 994V1009M852 994V1009M855 994V1009M858 994V1009M846 997H861M846 1000H861M846 1003H861M846 1006H861" stroke="#666" stroke-width=".7"/>
<g fill="#9cb4da" stroke="#4e6a96"><rect x="878" y="995" width="7" height="6"/><rect x="885" y="995" width="7" height="6"/><rect x="878" y="1001" width="7" height="6"/><rect x="885" y="1001" width="7" height="6"/></g>
<path d="M687 1000H692L689.500 1003ZM801.500 1000H806.500L804 1003ZM832.500 1000H837.500L835 1003ZM864.500 1000H869.500L867 1003ZM896.500 1000H901.500L899 1003Z" fill="#333"/>
<path d="M1543 1015C1535 1015 1535 1000 1543 999 1552 998 1552 1008 1552 1015Z" fill="#000"/><path d="M1539 1008L1547 1003" stroke="#aaa" stroke-width="1.500"/>

<!-- timeline -->
<path d="M2 1020H1566V1060Q1566 1073 1553 1073H15Q2 1073 2 1060Z" fill="#f3f3f3"/>
<rect x="2" y="1020" width="1564" height="2.500" fill="#d5d5d5"/>
<g fill="#757575">
<path d="M13 1041H16V1053H13ZM25 1041V1053L17 1047Z"/>
<path d="M39 1047L47 1041V1053ZM49 1044.500H52V1049.500H49Z"/>
<path d="M65 1039.500L77 1047 65 1054.500Z"/>
<path d="M103 1047L95 1041V1053ZM90 1044.500H93V1049.500H90Z"/>
<path d="M117 1041L125 1047 117 1053ZM125.500 1041H128V1053H125.500Z"/>
</g>
<rect x="151" y="1031" width="119" height="6" fill="#e8a0e8"/>
<path d="M266 1033H279L276 1040H274.200V1066H271V1040H269Z" fill="#6e6e6e"/>
<ellipse cx="161" cy="1047" rx="8.500" ry="6" fill="#7cbbe8" stroke="#64a8dc"/><ellipse cx="161" cy="1047" rx="4" ry="2.400" fill="#bfe0f5" stroke="#4f98d0"/>
<circle cx="186" cy="1047" r="8" fill="#8cc4ee"/><path d="M178 1047A8 8 0 0 0 194 1047Z" fill="#68b0e8"/>
<g fill="#62ace4"><circle cx="210" cy="1040" r="2"/><circle cx="216" cy="1044" r="2"/><circle cx="216" cy="1050" r="2"/><circle cx="210" cy="1054" r="2"/><circle cx="205" cy="1050" r="2"/></g><circle cx="205" cy="1044" r="2" fill="#fff" stroke="#777" stroke-width=".8"/>
<path d="M228 1043L232 1039H240L243 1044V1054H228Z" fill="#ccd2dc" stroke="#555" stroke-width="1.200"/><path d="M238 1040V1053" stroke="#f4f4f4" stroke-width="2"/>
<path d="M252 1042L262 1040 266 1045V1054H252Z" fill="#d6ae54" stroke="#a07a24"/><path d="M253 1047L265 1045M253 1050L265 1050" stroke="#f0dc9c"/><circle cx="263" cy="1044" r="3" fill="#ffab1a"/>
<path d="M162 1059V1064H260V1059M186 1059V1064M211 1059V1064M235 1059V1064" fill="none" stroke="#cfcfcf" stroke-width="1.200"/>
<g><circle cx="1542.500" cy="1047" r="5" fill="none" stroke="#6e6e6e" stroke-width="3"/><circle cx="1542.500" cy="1047" r="7" fill="none" stroke="#6e6e6e" stroke-width="2" stroke-dasharray="3 2.500"/></g>
</svg>
</body></html>
